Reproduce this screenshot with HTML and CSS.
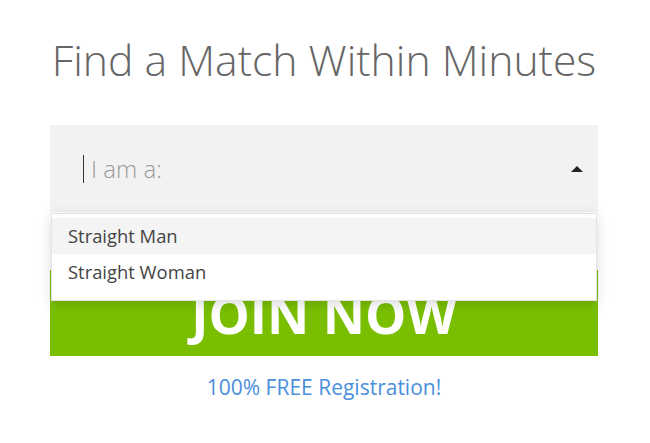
FILE: index.html
```html
<!DOCTYPE html>
<html lang="en">
<head>
    <meta charset="UTF-8">
    <meta name="viewport" content="width=device-width, initial-scale=1.0">
    <title>Find a Match</title>
    <link rel="stylesheet" href="styles.css">
</head>
<body>

    <div class="signup">
        <h1>Find a Match Within Minutes</h1>

        <div class="select">
            <div class="select-field">
                <span class="caret"></span>
                <span class="placeholder">I am a:</span>
                <span class="arrow"></span>
            </div>
            <ul class="options">
                <li class="active">Straight Man</li>
                <li>Straight Woman</li>
            </ul>
        </div>

        <button class="join">JOIN NOW</button>
        <p class="note">100% FREE Registration!</p>
    </div>

</body>
</html>
```

FILE: styles.css
```css
body {
    font-family: "Open Sans", Arial, sans-serif;
    background-color: #fff;
    margin: 0;
}
.signup {
    width: 548px;
    margin: 0 0 0 50px;
    padding-top: 1px;
}
h1 {
    font-weight: 300;
    font-size: 42.7px;
    color: #666;
    text-align: center;
    margin: 29px 0 0;
    line-height: 60px;
    white-space: nowrap;
}
.select {
    position: relative;
    margin-top: 35px;
}
.select-field {
    height: 87px;
    background-color: #f2f2f2;
    display: flex;
    align-items: center;
    padding: 0 15px 0 33px;
}
.caret {
    width: 1px;
    height: 28px;
    background-color: #333;
    margin-right: 7px;
}
.placeholder {
    font-weight: 300;
    font-size: 24px;
    color: #999;
    flex: 1;
}
.arrow {
    width: 0;
    height: 0;
    border-left: 6px solid transparent;
    border-right: 6px solid transparent;
    border-bottom: 6px solid #222;
}
.options {
    position: absolute;
    top: 88px;
    left: 1px;
    right: 1px;
    margin: 0;
    padding: 4px 0 10px;
    list-style: none;
    background-color: #fff;
    border: 1px solid #e2e2e2;
    box-shadow: 0 3px 12px rgba(0, 0, 0, 0.15);
    z-index: 2;
}
.options li {
    font-size: 18.4px;
    color: #444;
    padding: 0 16px;
    line-height: 36px;
}
.options li.active {
    background-color: #f4f4f4;
}
.join {
    display: block;
    width: 100%;
    height: 86px;
    margin-top: 58px;
    border: none;
    background-color: #79bf00;
    color: #fff;
    font-family: "Open Sans", Arial, sans-serif;
    font-weight: 700;
    font-size: 52px;
    cursor: pointer;
}
.note {
    text-align: center;
    color: #4a8fdc;
    font-size: 21px;
    margin: 17px 0 0;
}
```
